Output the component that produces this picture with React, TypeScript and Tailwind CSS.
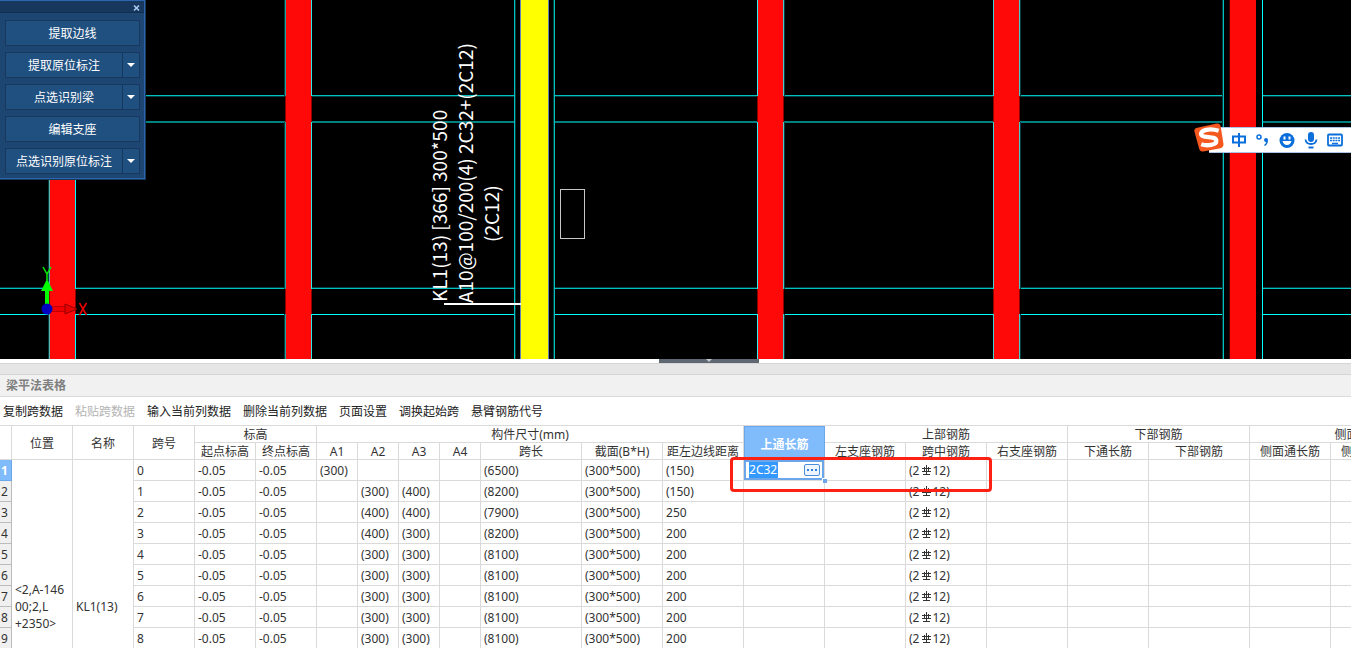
import { ReactNode } from 'react';

const COLUMN_WIDTHS = [12, 61, 61, 61, 61, 61, 41, 41, 41, 41, 101, 81, 81, 81, 81, 81, 81, 81, 101, 81, 81];

const ACTIONS = [
    { label: '提取边线', menu: false },
    { label: '提取原位标注', menu: true },
    { label: '点选识别梁', menu: true },
    { label: '编辑支座', menu: false },
    { label: '点选识别原位标注', menu: true },
];

const TOOLBAR = [
    { label: '复制跨数据', disabled: false },
    { label: '粘贴跨数据', disabled: true },
    { label: '输入当前列数据', disabled: false },
    { label: '删除当前列数据', disabled: false },
    { label: '页面设置', disabled: false },
    { label: '调换起始跨', disabled: false },
    { label: '悬臂钢筋代号', disabled: false },
];

interface Span {
    a1?: string;
    a2?: string;
    a3?: string;
    length: string;
    offset: string;
}

const SPANS: Span[] = [
    { a1: '(300)', length: '(6500)', offset: '(150)' },
    { a2: '(300)', a3: '(400)', length: '(8200)', offset: '(150)' },
    { a2: '(400)', a3: '(400)', length: '(7900)', offset: '250' },
    { a2: '(400)', a3: '(300)', length: '(8200)', offset: '200' },
    { a2: '(300)', a3: '(300)', length: '(8100)', offset: '200' },
    { a2: '(300)', a3: '(300)', length: '(8100)', offset: '200' },
    { a2: '(300)', a3: '(300)', length: '(8100)', offset: '200' },
    { a2: '(300)', a3: '(300)', length: '(8100)', offset: '200' },
    { a2: '(300)', a3: '(300)', length: '(8100)', offset: '200' },
    { a2: '(300)', a3: '(300)', length: '(8100)', offset: '200' },
    { a2: '(300)', a3: '(300)', length: '(8100)', offset: '200' },
    { a2: '(300)', a3: '(300)', length: '(8100)', offset: '200' },
    { a2: '(300)', a3: '(300)', length: '(8100)', offset: '200' },
    { a2: '(300)', a3: '(300)', length: '(8100)', offset: '200' },
];

// Horizontal gridlines are broken wherever a beam crosses them
const GRID_SEGMENTS = [
    [0, 49],
    [76, 285],
    [312, 515],
    [554, 757],
    [784, 993],
    [1020, 1224],
    [1262, 4000],
];

const RED_BEAMS = [
    { x: 50, left: '#5fb0b0', right: '#00ffff', shadow: 48 },
    { x: 286, left: '#20a0a0', right: '#30e8e8', shadow: 284 },
    { x: 758, left: '#30f0f0', right: '#50c8c8', shadow: 784 },
    { x: 994, left: '#40d0d0', right: '#50c8c8', shadow: 1020 },
];

const EDGE_RUNS = [
    [0, 96],
    [122, 289],
    [314, 359],
];

function Drawing() {
    return (
        <svg className="block h-full w-full" shapeRendering="crispEdges">
            {GRID_SEGMENTS.map(([from, to]) => (
                <g key={from}>
                    <rect x={from} y="95" width={to - from} height="1" fill="#00c0c0" />
                    <rect x={from} y="96" width={to - from} height="1" fill="#004040" />
                    <rect x={from} y="121" width={to - from} height="2" fill="#008080" />
                    <rect x={from} y="287" width={to - from} height="1" fill="#004040" />
                    <rect x={from} y="288" width={to - from} height="1" fill="#00c0c0" />
                    <rect x={from} y="314" width={to - from} height="1" fill="#00ffff" />
                </g>
            ))}

            {RED_BEAMS.map((beam) => (
                <g key={beam.x}>
                    <rect x={beam.x - 1} y="0" width="27" height="359" fill="#900000" />
                    <rect x={beam.x} y="0" width="25" height="359" fill="#ff0808" />
                    {EDGE_RUNS.map(([top, bottom]) => (
                        <g key={top}>
                            <rect x={beam.shadow} y={top} width="1" height={bottom - top} fill="#004040" />
                            <rect x={beam.x - 1} y={top} width="1" height={bottom - top} fill={beam.left} />
                            <rect x={beam.x + 25} y={top} width="1" height={bottom - top} fill={beam.right} />
                        </g>
                    ))}
                </g>
            ))}

            <rect x="1222" y="0" width="1" height="359" fill="#004040" />
            <rect x="1223" y="0" width="1" height="359" fill="#00c0c0" />
            <rect x="1229" y="0" width="1" height="359" fill="#400000" />
            <rect x="1230" y="0" width="26" height="359" fill="#ff0808" />
            <rect x="1262" y="0" width="1" height="359" fill="#00ffff" />

            <rect x="514" y="0" width="1" height="359" fill="#00c0c0" />
            <rect x="515" y="0" width="1" height="359" fill="#004040" />
            <rect x="553" y="0" width="1" height="359" fill="#004040" />
            <rect x="554" y="0" width="1" height="359" fill="#00c0c0" />
            <rect x="520" y="0" width="29" height="359" fill="#6482b4" />
            <rect x="521" y="0" width="27" height="359" fill="#ffff00" />

            <rect x="444" y="303" width="77" height="2" fill="#ffffff" />
            <rect x="560" y="189" width="24" height="49" fill="none" stroke="#c8c8c8" />

            <g
                fill="#ffffff"
                fontFamily="'Noto Sans CJK SC', sans-serif"
                fontSize="19"
                shapeRendering="auto"
            >
                <text transform="translate(447 302) rotate(-90)">KL1(13) [366] 300*500</text>
                <text transform="translate(473 303) rotate(-90)">A10@100/200(4) 2C32+(2C12)</text>
                <text transform="translate(499 242) rotate(-90)">(2C12)</text>
            </g>

            {/* Axis marker */}
            <g shapeRendering="auto">
                <path d="M52 309H66" stroke="#f00000" strokeWidth="5" />
                <path d="M52 306.500H66M52 311.500H66" stroke="#c00000" />
                <path d="M65 304L77 309L65 314Z" fill="#e80000" stroke="#900000" />
                <path d="M47 307V288" stroke="#00ff00" strokeWidth="4" />
                <path d="M41 291L47 279L53 291Z" fill="#00ff00" />
                <path d="M43 267L47 274L51 267M47 273V280" fill="none" stroke="#00f000" strokeWidth="1.500" />
                <path d="M79.500 303L86.500 315M86.500 303L79.500 315" stroke="#f00000" strokeWidth="1.500" />
                <circle cx="47" cy="309" r="5.500" fill="#0000c0" />
            </g>
        </svg>
    );
}

function ActionPanel() {
    return (
        <div className="absolute top-0 left-0 w-[146px] border-r border-b border-[#17375c] bg-[#1d4673]">
            <div className="border-t border-r border-b border-[#2a66ab]">
                <div className="flex h-3 items-end justify-end border-b border-[#122f50] bg-[#17375c] pr-[3px]">
                    <button aria-label="关闭" className="p-px text-[#a9cdf5]">
                        <svg width="7" height="6" viewBox="0 0 7 6">
                            <path d="M1 0.5L6 5.5M6 0.5L1 5.5" stroke="currentColor" strokeWidth="1.500" />
                        </svg>
                    </button>
                </div>
                <div className="flex flex-col gap-[6px] pt-[7px] pr-1 pb-1 pl-[5px]">
                    {ACTIONS.map((action) => (
                        <div key={action.label} className="flex h-[26px] border border-[#17375c] bg-[#20507f] text-white">
                            <button className="flex-1 pt-[2px] text-center whitespace-nowrap">{action.label}</button>
                            {action.menu && (
                                <button
                                    aria-label={`${action.label}选项`}
                                    className="flex w-[17px] items-center justify-center border-l border-[#17375c]"
                                >
                                    <svg width="8" height="4" viewBox="0 0 8 4">
                                        <path d="M0 0H8L4 4Z" fill="currentColor" />
                                    </svg>
                                </button>
                            )}
                        </div>
                    ))}
                </div>
            </div>
        </div>
    );
}

function InputMethodBar() {
    return (
        <div className="absolute top-[123px] right-0 flex items-end">
            <svg className="relative z-10 -mr-4" width="32" height="30" viewBox="0 0 32 31">
                <path d="M4 5L24 0.500Q27 0 28 3L31 22Q31 25 28 26L10 29.500Q7 30 6 27L1 9Q0 6 4 5Z" fill="#f4581f" />
                <path
                    d="M26 8C17 5 7 7 8 12C9 16 23 13 23.500 18C24 23 14 24 8 22"
                    fill="none"
                    stroke="#ffffff"
                    strokeWidth="4.500"
                />
            </svg>
            <div className="flex h-[26px] items-center gap-2 border-y border-[#a9c4e6] bg-white pr-2 pl-[22px] text-[#0a6fdb]">
                <button aria-label="中文">
                    <svg width="16" height="16" viewBox="0 0 16 16" fill="none" stroke="currentColor" strokeWidth="2">
                        <path d="M2 4.500H14V10.500H2ZM8 1V15" />
                    </svg>
                </button>
                <button aria-label="标点">
                    <svg width="16" height="16" viewBox="0 0 16 16">
                        <circle cx="4" cy="5" r="2" fill="none" stroke="currentColor" strokeWidth="1.500" />
                        <path d="M9 8a2 2 0 1 1 4 0q0 4-3 6l-1-1q2-1 2-3q-2 0-2-2Z" fill="currentColor" />
                    </svg>
                </button>
                <button aria-label="表情">
                    <svg width="16" height="16" viewBox="0 0 16 16">
                        <circle cx="8" cy="8.500" r="7.500" fill="currentColor" />
                        <path d="M4.500 4.500h2v3h-2zM9.500 4.500h2v3h-2zM3.500 9h9q-1 4-4.500 4t-4.500-4Z" fill="#ffffff" />
                    </svg>
                </button>
                <button aria-label="语音">
                    <svg width="16" height="17" viewBox="0 0 16 17">
                        <rect x="5" y="0" width="6" height="10" rx="3" fill="currentColor" />
                        <path d="M2.500 7.500Q3 12 8 12T13.500 7.500M5.500 15.500H10.500" fill="none" stroke="currentColor" strokeWidth="1.800" />
                    </svg>
                </button>
                <button aria-label="键盘">
                    <svg width="16" height="14" viewBox="0 0 16 14">
                        <rect x="1" y="1.500" width="14" height="11" rx="1" fill="none" stroke="currentColor" strokeWidth="1.800" />
                        <path d="M3 5H13M3 7.500H13" stroke="currentColor" strokeWidth="1.500" strokeDasharray="2 0.700" />
                        <path d="M5 10.500H11" stroke="currentColor" strokeWidth="1.500" />
                    </svg>
                </button>
            </div>
        </div>
    );
}

function HeadCell({ children, colSpan, rowSpan }: { children?: ReactNode; colSpan?: number; rowSpan?: number }) {
    return (
        <th
            colSpan={colSpan}
            rowSpan={rowSpan}
            className="border-r border-b border-[#dadada] p-0 pt-[2px] text-center leading-[14px] font-normal whitespace-nowrap"
        >
            {children}
        </th>
    );
}

function Cell({ children }: { children?: ReactNode }) {
    return <td className="border-r border-b border-[#dadada] p-0 pt-[2px] pl-[3px] whitespace-nowrap">{children}</td>;
}

// Rebar grade mark that sits between the bar count and the diameter
function RebarMark() {
    return (
        <svg
            className="-mt-1 ml-[2px] inline-block"
            width="11"
            height="10"
            viewBox="0 0 11 10"
            fill="none"
            stroke="currentColor"
            shapeRendering="crispEdges"
        >
            <path d="M5.500 0V9M3.500 2V7M7.500 2V7M1 3.500H10M1 6.500H10M2 9.500H9" />
        </svg>
    );
}

function EditingCell() {
    return (
        <td className="relative border-r border-b border-[#dadada] p-0">
            <div className="flex h-5 items-center border-2 border-[#6ba6ea] bg-white pr-[2px] pl-[3px]">
                <input
                    aria-label="上通长筋"
                    defaultValue="2C32"
                    className="h-4 w-[29px] bg-[#3399ff] p-0 text-white outline-none"
                />
                <button
                    aria-label="更多"
                    className="ml-auto flex h-3 w-4 items-center justify-center gap-[2px] rounded-xs border border-[#4a8edb] bg-[#eef5fd]"
                >
                    <span className="size-[2px] bg-[#2f7fd8]" />
                    <span className="size-[2px] bg-[#2f7fd8]" />
                    <span className="size-[2px] bg-[#2f7fd8]" />
                </button>
            </div>
            <span className="absolute -right-[3px] -bottom-[3px] z-10 size-[5px] border-t border-l border-white bg-[#6ba6ea]" />
            {/* Callout frame round the edited span */}
            <div className="pointer-events-none absolute -top-[3px] -left-[14px] z-20 h-[35px] w-[262px] rounded-sm border-3 border-[#ff2014]" />
        </td>
    );
}

function BeamTable() {
    return (
        <table className="w-[1412px] table-fixed border-separate border-spacing-0 border-t border-[#dadada]">
            <colgroup>
                {COLUMN_WIDTHS.map((width, i) => (
                    <col key={i} style={{ width }} />
                ))}
            </colgroup>
            <thead>
                <tr className="h-[17px]">
                    <HeadCell rowSpan={2} />
                    <HeadCell rowSpan={2}>位置</HeadCell>
                    <HeadCell rowSpan={2}>名称</HeadCell>
                    <HeadCell rowSpan={2}>跨号</HeadCell>
                    <HeadCell colSpan={2}>标高</HeadCell>
                    <HeadCell colSpan={7}>构件尺寸(mm)</HeadCell>
                    <th
                        rowSpan={2}
                        className="border border-b-0 border-[#6ba6ea] bg-[#80bbfc] p-0 pt-[2px] text-center leading-[14px] font-bold text-white"
                    >
                        上通长筋
                    </th>
                    <HeadCell colSpan={3}>上部钢筋</HeadCell>
                    <HeadCell colSpan={2}>下部钢筋</HeadCell>
                    <HeadCell colSpan={2}>
                        <span className="pl-14">侧面钢筋</span>
                    </HeadCell>
                </tr>
                <tr className="h-[17px]">
                    {['起点标高', '终点标高', 'A1', 'A2', 'A3', 'A4', '跨长', '截面(B*H)', '距左边线距离'].map((label) => (
                        <HeadCell key={label}>{label}</HeadCell>
                    ))}
                    {['左支座钢筋', '跨中钢筋', '右支座钢筋', '下通长筋', '下部钢筋', '侧面通长筋', '侧面原位筋'].map((label) => (
                        <HeadCell key={label}>{label}</HeadCell>
                    ))}
                </tr>
            </thead>
            <tbody>
                {SPANS.map((span, i) => (
                    <tr key={i} className="h-[21px]">
                        <th
                            className={
                                i === 0
                                    ? 'border-r border-b border-[#6ba6ea] bg-[#80bbfc] p-0 pt-[2px] pl-px text-left font-bold text-white'
                                    : 'border-r border-b border-[#bcbcbc] bg-[#f0f0f0] p-0 pt-[2px] pl-px text-left font-normal'
                            }
                        >
                            {i + 1}
                        </th>
                        {i === 0 && (
                            <>
                                <td rowSpan={14} className="border-r border-b border-[#dadada] p-0 pl-[3px] leading-[17px]">
                                    &lt;2,A-146
                                    <br />
                                    00;2,L
                                    <br />
                                    +2350&gt;
                                </td>
                                <td rowSpan={14} className="border-r border-b border-[#dadada] p-0 pl-[3px]">
                                    KL1(13)
                                </td>
                            </>
                        )}
                        <Cell>{i}</Cell>
                        <Cell>-0.05</Cell>
                        <Cell>-0.05</Cell>
                        <Cell>{span.a1}</Cell>
                        <Cell>{span.a2}</Cell>
                        <Cell>{span.a3}</Cell>
                        <Cell />
                        <Cell>{span.length}</Cell>
                        <Cell>(300*500)</Cell>
                        <Cell>{span.offset}</Cell>
                        {i === 0 ? <EditingCell /> : <Cell />}
                        <Cell />
                        <Cell>
                            (2
                            <RebarMark />
                            12)
                        </Cell>
                        <Cell />
                        <Cell />
                        <Cell />
                        <Cell />
                        <Cell />
                    </tr>
                ))}
            </tbody>
        </table>
    );
}

export default function App() {
    return (
        <div className="flex h-screen flex-col overflow-hidden bg-white font-['Noto_Sans','Noto_Sans_CJK_SC',sans-serif] text-xs leading-4 text-[#333333]">
            <main className="relative h-[359px] shrink-0 overflow-hidden bg-black">
                <Drawing />
                <ActionPanel />
                <InputMethodBar />
            </main>

            <div className="flex h-4 shrink-0 flex-col border-b border-[#d5d5d5]">
                <div className="flex h-1 justify-center pl-[67px]">
                    <button aria-label="收起" className="flex w-[100px] justify-center bg-[#5e6772] text-[#c4c9cf]">
                        <svg width="6" height="3" viewBox="0 0 6 3">
                            <path d="M0 0H6L3 3Z" fill="currentColor" />
                        </svg>
                    </button>
                </div>
                <div className="flex-1 border-t border-[#d5d5d5] bg-[#e6e6e6]" />
            </div>

            <h2 className="flex h-[22px] shrink-0 items-center border-b border-[#dadada] bg-[#f1f1f1] pl-[6px] font-bold text-[#808080]">
                梁平法表格
            </h2>

            <div className="flex h-7 shrink-0 items-center gap-3 pt-[2px] pl-[3px]">
                {TOOLBAR.map((item) => (
                    <button
                        key={item.label}
                        disabled={item.disabled}
                        className="whitespace-nowrap text-[#222222] disabled:text-[#b4b4b4]"
                    >
                        {item.label}
                    </button>
                ))}
            </div>

            <section className="min-h-0 flex-1 overflow-hidden">
                <BeamTable />
            </section>
        </div>
    );
}
